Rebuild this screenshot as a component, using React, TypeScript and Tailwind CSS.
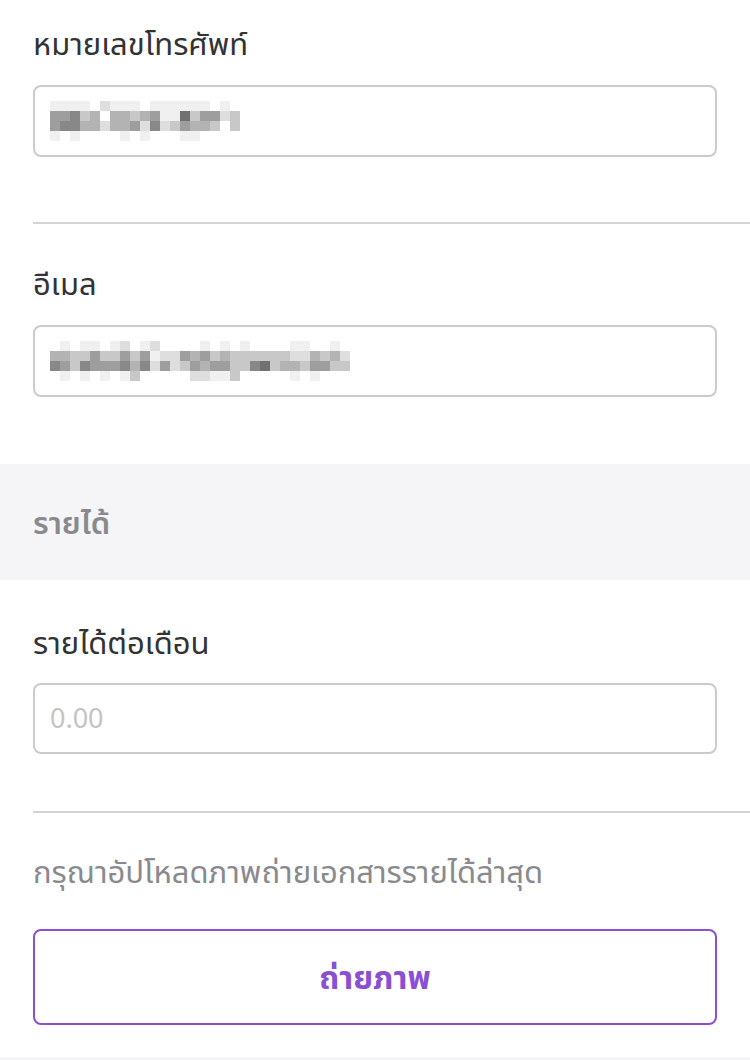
const shades = [
  "bg-white",
  "bg-[#f0f0f0]",
  "bg-[#dedede]",
  "bg-[#c8c8c8]",
  "bg-[#b3b3b3]",
  "bg-[#9e9e9e]",
  "bg-[#888888]",
  "bg-[#717171]",
];

// redacted values, one digit per 10px block
const phoneMosaic = [
  "1111021110111111010",
  "5563404434511735523",
  "5664424452623544303",
  "1010000101000110000",
];

const emailMosaic = [
  "010110120120000101010000110010",
  "443353353512254534333333224342",
  "653655564625235455336734435533",
  "010101013000002211300000101000",
];

function Mosaic({ rows }: { rows: string[] }) {
  return (
    <div className="flex flex-col">
      {rows.map((row, r) => (
        <div key={r} className="flex">
          {row.split("").map((c, i) => (
            <span key={i} className={`block w-[10px] h-[10px] ${shades[Number(c)]}`} />
          ))}
        </div>
      ))}
    </div>
  );
}

const font = { fontFamily: '"Noto Sans", "Noto Sans Thai", sans-serif' };

function Box({ children, h = "h-[72px]" }: { children?: React.ReactNode; h?: string }) {
  return (
    <div className={`${h} mx-[33px] rounded-[8px] border-2 border-[#cbcbcb] bg-white flex items-center pl-[15px]`}>
      {children}
    </div>
  );
}

export default function App() {
  return (
    <div className="min-h-screen bg-white text-[#333336]" style={font}>
      {/* phone */}
      <div className="pt-[25px] pb-[65px]">
        <p className="px-[33px] text-[31px] leading-[36px] mb-[24px]">หมายเลขโทรศัพท์</p>
        <Box>
          <Mosaic rows={phoneMosaic} />
        </Box>
      </div>
      <div className="ml-[33px] h-[2px] bg-[#d4d4d8]" />

      {/* email */}
      <div className="pt-[41px] pb-[67px]">
        <p className="px-[33px] text-[31px] leading-[36px] mb-[24px]">อีเมล</p>
        <Box>
          <Mosaic rows={emailMosaic} />
        </Box>
      </div>

      {/* income header */}
      <div className="h-[116px] bg-[#f5f5f7] flex items-center px-[33px]">
        <span className="text-[31px] leading-[36px] font-semibold text-[#8a8a8e]">รายได้</span>
      </div>

      {/* monthly income */}
      <div className="pt-[44px] pb-[57px]">
        <p className="px-[33px] text-[31px] leading-[36px] mb-[23px]">รายได้ต่อเดือน</p>
        <Box h="h-[71px]">
          <input
            placeholder="0.00"
            className="w-full outline-none bg-transparent text-[27px] placeholder:text-[#c4c4c6]"
            style={font}
          />
        </Box>
      </div>
      <div className="ml-[33px] h-[2px] bg-[#d4d4d8]" />

      {/* upload */}
      <div className="pt-[40px] pb-[32px]">
        <p className="px-[33px] text-[31px] leading-[36px] mb-[40px] text-[#8a8a8e]">
          กรุณาอัปโหลดภาพถ่ายเอกสารรายได้ล่าสุด
        </p>
        <button
          className="mx-[33px] w-[684px] h-[96px] rounded-[8px] border-2 border-[#8a4fd3] bg-white text-[#8a4fd3] text-[32px] font-bold"
          style={font}
        >
          ถ่ายภาพ
        </button>
      </div>
      <div className="h-[40px] bg-[#f5f5f7]" />
    </div>
  );
}
